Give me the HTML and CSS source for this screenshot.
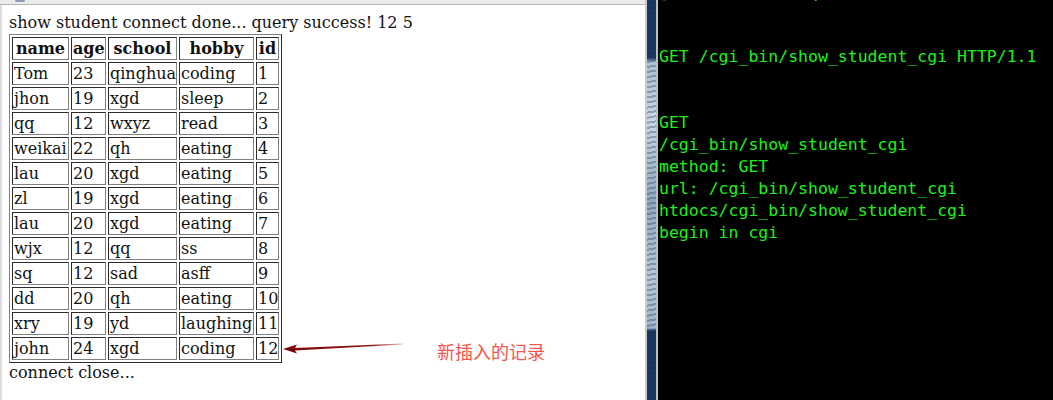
FILE: index.html
```html
<!DOCTYPE html>
<html>
<head>
<meta charset="utf-8">
<link rel="stylesheet" href="styles.css">
</head>
<body>
<div class="screen">
  <div class="browser">
    <div class="chrome"><span class="tab-icon"></span></div>
    <div class="page">
      <div class="line first">show student connect done... query success! 12 5</div>
      <table class="students">
        <tr><th class="c-name">name</th><th class="c-age">age</th><th class="c-school">school</th><th class="c-hobby">hobby</th><th class="c-id">id</th></tr>
        <tr><td>Tom</td><td>23</td><td>qinghua</td><td>coding</td><td>1</td></tr>
        <tr><td>jhon</td><td>19</td><td>xgd</td><td>sleep</td><td>2</td></tr>
        <tr><td>qq</td><td>12</td><td>wxyz</td><td>read</td><td>3</td></tr>
        <tr><td>weikai</td><td>22</td><td>qh</td><td>eating</td><td>4</td></tr>
        <tr><td>lau</td><td>20</td><td>xgd</td><td>eating</td><td>5</td></tr>
        <tr><td>zl</td><td>19</td><td>xgd</td><td>eating</td><td>6</td></tr>
        <tr><td>lau</td><td>20</td><td>xgd</td><td>eating</td><td>7</td></tr>
        <tr><td>wjx</td><td>12</td><td>qq</td><td>ss</td><td>8</td></tr>
        <tr><td>sq</td><td>12</td><td>sad</td><td>asff</td><td>9</td></tr>
        <tr><td>dd</td><td>20</td><td>qh</td><td>eating</td><td>10</td></tr>
        <tr><td>xry</td><td>19</td><td>yd</td><td>laughing</td><td>11</td></tr>
        <tr><td>john</td><td>24</td><td>xgd</td><td>coding</td><td>12</td></tr>
      </table>
      <div class="line">connect close...</div>
    </div>
    <svg class="arrow" width="130" height="16" viewBox="0 0 130 16">
      <defs>
        <linearGradient id="shaft" x1="0" y1="0" x2="1" y2="0">
          <stop offset="0" stop-color="#7a0808"/>
          <stop offset="0.75" stop-color="#8a1a1a"/>
          <stop offset="1" stop-color="#e8c4c4"/>
        </linearGradient>
      </defs>
      <polygon points="3,9 17,4.5 15,8 123,3.6 123,4.4 15,10.6 17,13.5" fill="url(#shaft)"/>
    </svg>
    <div class="note">新插入的记录</div>
  </div>
  <div class="divider"></div>
  <div class="terminal"><pre class="log"><span class="tail">[              q</span>


GET /cgi_bin/show_student_cgi HTTP/1.1


GET
/cgi_bin/show_student_cgi
method: GET
url: /cgi_bin/show_student_cgi
htdocs/cgi_bin/show_student_cgi
begin in cgi</pre></div>
</div>
</body>
</html>
```
FILE: styles.css
```css
html, body {
  margin: 0;
  padding: 0;
  background: #fff;
}
.screen {
  display: flex;
  width: 1053px;
  height: 400px;
  overflow: hidden;
}
.browser {
  position: relative;
  width: 645px;
  flex: none;
  display: flex;
  flex-direction: column;
  background: #fff;
}
.chrome {
  height: 4px;
  background: #ebebe9;
  border-bottom: 1px solid #b4b4b2;
  display: flex;
}
.tab-icon {
  width: 10px;
  height: 2px;
  margin-left: 15px;
  background: #8d9cb0;
  border-radius: 0 0 3px 3px;
}
.page {
  flex: 1;
  border-left: 2px solid #dedede;
  padding: 8px 7px;
  font-family: "DejaVu Serif", serif;
  font-size: 16px;
  color: #111;
}
.first {
  margin-bottom: 2px;
}
.students {
  border: 1px outset gray;
  border-spacing: 2px;
  table-layout: fixed;
  width: 273px;
}
.students th,
.students td {
  border: 1px inset gray;
  padding: 1px;
  text-align: left;
  font-weight: normal;
  white-space: nowrap;
  box-sizing: border-box;
}
.students th {
  text-align: center;
  font-weight: bold;
}
.c-name { width: 57px; }
.c-age { width: 35px; }
.c-school { width: 69px; }
.c-hobby { width: 75px; }
.c-id { width: 23px; }
.arrow {
  position: absolute;
  left: 280px;
  top: 340px;
}
.note {
  position: absolute;
  left: 437px;
  top: 342px;
  font-family: "Noto Sans CJK SC", sans-serif;
  font-size: 18px;
  line-height: 18px;
  color: #f4574b;
}
.divider {
  width: 9px;
  flex: none;
  border-left: 2px solid #c9c9c9;
  border-right: 2px solid #bdbdbd;
  background:
    repeating-linear-gradient(170deg, rgba(30,60,100,0.35) 0 2px, rgba(255,255,255,0) 2px 5px),
    linear-gradient(to bottom, #17365e 0, #17365e 58px, #a9c0d2 62px, #c8d8e4 120px, #8fa9c0 200px, #b6c9d8 280px, #9db5c9 328px, #17365e 331px, #17365e 100%);
}
.terminal {
  flex: 1;
  background: #000;
  overflow: hidden;
}
.log {
  margin: -20px 0 0 0;
  padding-left: 1px;
  font-family: "DejaVu Sans Mono", monospace;
  font-size: 16.5px;
  line-height: 22px;
  color: #1ef01e;
}
.tail {
  position: relative;
  top: 2px;
}
```
